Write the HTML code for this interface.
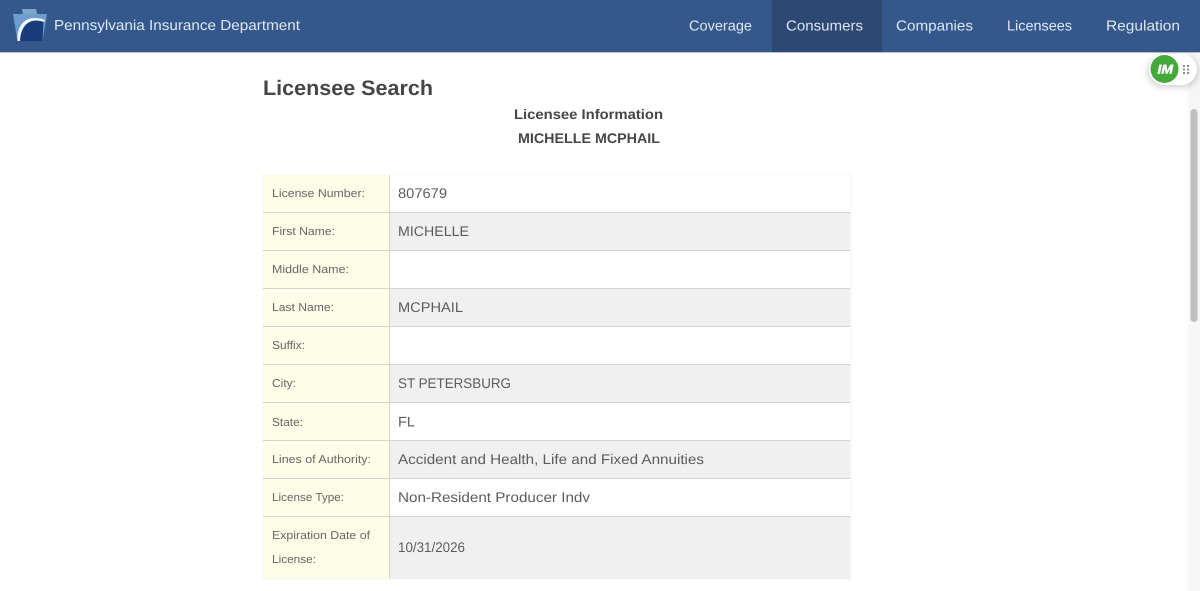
<!DOCTYPE html>
<html lang="en">
<head>
<meta charset="utf-8">
<title>Licensee Search - Pennsylvania Insurance Department</title>
<style>
html,body{margin:0;padding:0;width:1200px;height:591px;overflow:hidden;background:#fff}
svg{display:block;position:absolute;left:0;top:0}
text{font-family:"Liberation Sans",Arial,sans-serif;text-rendering:geometricPrecision}
.nav{font-size:14.5px;fill:#dfe6f0}
.lab{font-size:11.5px;fill:#666}
.val{font-size:14px;fill:#5c5c5c}
.hd{font-weight:700;fill:#464646}
</style>
</head>
<body>
<svg width="1200" height="591" viewBox="0 0 1200 591" xmlns="http://www.w3.org/2000/svg">
<defs>
<filter id="sh" x="-30%" y="-40%" width="160%" height="180%"><feGaussianBlur stdDeviation="3.5"/></filter>
</defs>
<rect width="1200" height="591" fill="#fff"/>
<rect x="1189" y="52" width="11" height="539" fill="#f6f6f6"/>
<rect x="1187" y="52" width="2" height="539" fill="#fbfbfb"/>
<rect x="1190.5" y="109" width="7" height="213" rx="3.5" fill="#c0c0c0"/>

<rect width="1200" height="52" fill="#35588c"/>
<rect y="52" width="1200" height="1" fill="#b4bdcc"/>
<rect x="772" width="110" height="52" fill="#2c4873"/>

<path d="M22 9H36L37 14H47L42.500 41H17.500L13 14H23Z" fill="#6d9dce"/>
<path d="M22 9H36L37 14H23Z" fill="#7fa6cc"/>
<path d="M20 41C20.500 28 27 20.500 36 20.500C39 20.500 41 21 43.500 21.500L42.500 41Z" fill="#183c7c"/>
<path d="M17.500 41C16.500 27 24 18 34 18C38 18 41.500 18.500 44.800 20L44.300 22C41 21 38.500 20.500 36 20.500C27 20.500 20.500 28 20 41Z" fill="#f2f6fb"/>

<text x="54" y="30" font-size="14.5" fill="#dfe6f0" textLength="246" lengthAdjust="spacingAndGlyphs">Pennsylvania Insurance Department</text>
<text class="nav" x="689" y="30.5" textLength="63" lengthAdjust="spacingAndGlyphs">Coverage</text>
<text class="nav" x="786" y="30.5" textLength="77" lengthAdjust="spacingAndGlyphs">Consumers</text>
<text class="nav" x="896" y="30.5" textLength="77" lengthAdjust="spacingAndGlyphs">Companies</text>
<text class="nav" x="1007" y="30.5" textLength="65" lengthAdjust="spacingAndGlyphs">Licensees</text>
<text class="nav" x="1106" y="30.5" textLength="74" lengthAdjust="spacingAndGlyphs">Regulation</text>

<rect x="1148" y="56" width="50" height="31" rx="15" fill="#000" opacity=".2" filter="url(#sh)"/>
<rect x="1149" y="54" width="48" height="31" rx="15.500" fill="#fff"/>
<circle cx="1164.500" cy="69" r="14" fill="#44a83a"/>
<text x="1157.500" y="73.500" font-size="12.500" font-weight="700" font-style="italic" fill="#fff" stroke="#fff" stroke-width=".5" textLength="15.500" lengthAdjust="spacingAndGlyphs">IM</text>
<g fill="#8a8a8a">
<rect x="1183" y="65" width="2" height="2"/><rect x="1187" y="65" width="2" height="2"/>
<rect x="1183" y="68.500" width="2" height="2"/><rect x="1187" y="68.500" width="2" height="2"/>
<rect x="1183" y="72" width="2" height="2"/><rect x="1187" y="72" width="2" height="2"/>
</g>

<text class="hd" x="263" y="95" font-size="21" textLength="170" lengthAdjust="spacingAndGlyphs">Licensee Search</text>
<text class="hd" x="514" y="119" font-size="14" textLength="149" lengthAdjust="spacingAndGlyphs">Licensee Information</text>
<text class="hd" x="518" y="143" font-size="14" textLength="142" lengthAdjust="spacingAndGlyphs">MICHELLE MCPHAIL</text>

<rect x="262" y="174" width="590" height="406" fill="#f8f8f8"/>
<rect x="263" y="175" width="587" height="404" fill="#fff"/>
<rect x="263" y="175" width="126" height="404" fill="#fefee8"/>
<g fill="#f0f0f0">
<rect x="390" y="213" width="460" height="37"/>
<rect x="390" y="289" width="460" height="37"/>
<rect x="390" y="365" width="460" height="37"/>
<rect x="390" y="441" width="460" height="37"/>
<rect x="390" y="517" width="460" height="62"/>
</g>
<g fill="#d4d4cf">
<rect x="263" y="212" width="587" height="1"/>
<rect x="263" y="250" width="587" height="1"/>
<rect x="263" y="288" width="587" height="1"/>
<rect x="263" y="326" width="587" height="1"/>
<rect x="263" y="364" width="587" height="1"/>
<rect x="263" y="402" width="587" height="1"/>
<rect x="263" y="440" width="587" height="1"/>
<rect x="263" y="478" width="587" height="1"/>
<rect x="263" y="516" width="587" height="1"/>
<rect x="389" y="175" width="1" height="404"/>
</g>

<text class="lab" x="272" y="197" textLength="93" lengthAdjust="spacingAndGlyphs">License Number:</text>
<text class="lab" x="272" y="235" textLength="63" lengthAdjust="spacingAndGlyphs">First Name:</text>
<text class="lab" x="272" y="273" textLength="77" lengthAdjust="spacingAndGlyphs">Middle Name:</text>
<text class="lab" x="272" y="311" textLength="62" lengthAdjust="spacingAndGlyphs">Last Name:</text>
<text class="lab" x="272" y="349" textLength="33" lengthAdjust="spacingAndGlyphs">Suffix:</text>
<text class="lab" x="272" y="387" textLength="24" lengthAdjust="spacingAndGlyphs">City:</text>
<text class="lab" x="272" y="426" textLength="31" lengthAdjust="spacingAndGlyphs">State:</text>
<text class="lab" x="272" y="463" textLength="99" lengthAdjust="spacingAndGlyphs">Lines of Authority:</text>
<text class="lab" x="272" y="501" textLength="72" lengthAdjust="spacingAndGlyphs">License Type:</text>
<text class="lab" x="272" y="539" textLength="98" lengthAdjust="spacingAndGlyphs">Expiration Date of</text>
<text class="lab" x="272" y="563" textLength="44" lengthAdjust="spacingAndGlyphs">License:</text>

<text class="val" x="398" y="198" textLength="49" lengthAdjust="spacingAndGlyphs">807679</text>
<text class="val" x="398" y="236" textLength="71" lengthAdjust="spacingAndGlyphs">MICHELLE</text>
<text class="val" x="398" y="312" textLength="65" lengthAdjust="spacingAndGlyphs">MCPHAIL</text>
<text class="val" x="398" y="388" textLength="113" lengthAdjust="spacingAndGlyphs">ST PETERSBURG</text>
<text class="val" x="398" y="426.500" textLength="17" lengthAdjust="spacingAndGlyphs">FL</text>
<text class="val" x="398" y="464" textLength="306" lengthAdjust="spacingAndGlyphs">Accident and Health, Life and Fixed Annuities</text>
<text class="val" x="398" y="502" textLength="192" lengthAdjust="spacingAndGlyphs">Non-Resident Producer Indv</text>
<text class="val" x="398" y="552" textLength="67" lengthAdjust="spacingAndGlyphs">10/31/2026</text>
</svg>
</body>
</html>
